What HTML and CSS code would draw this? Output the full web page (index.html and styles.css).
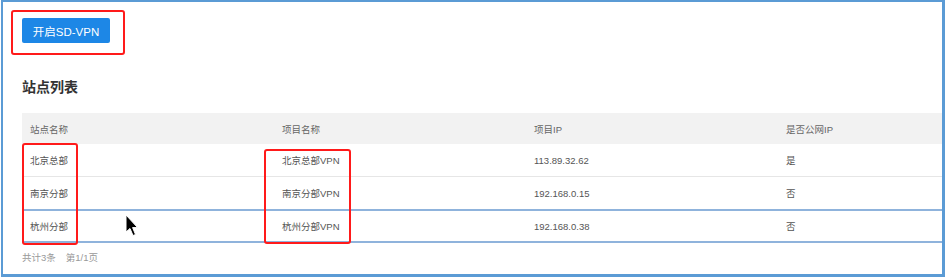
FILE: index.html
```html
<!DOCTYPE html>
<html lang="zh-CN">
<head>
<meta charset="utf-8">
<title>SD-VPN</title>
<link rel="stylesheet" href="styles.css">
</head>
<body>
<div class="frame">
  <div class="content">
    <button class="btn">开启SD-VPN</button>
    <h2 class="title">站点列表</h2>
    <div class="table">
      <div class="row head">
        <div class="cell">站点名称</div>
        <div class="cell">项目名称</div>
        <div class="cell">项目IP</div>
        <div class="cell">是否公网IP</div>
      </div>
      <div class="row">
        <div class="cell">北京总部</div>
        <div class="cell">北京总部VPN</div>
        <div class="cell">113.89.32.62</div>
        <div class="cell">是</div>
      </div>
      <div class="row">
        <div class="cell">南京分部</div>
        <div class="cell">南京分部VPN</div>
        <div class="cell">192.168.0.15</div>
        <div class="cell">否</div>
      </div>
      <div class="row selected">
        <div class="cell">杭州分部</div>
        <div class="cell">杭州分部VPN</div>
        <div class="cell">192.168.0.38</div>
        <div class="cell">否</div>
      </div>
    </div>
    <div class="footer"><span>共计3条</span><span>第1/1页</span></div>
  </div>
  <div class="mark mark-btn"></div>
  <div class="mark mark-col1"></div>
  <div class="mark mark-col2"></div>
  <svg class="cursor" width="14" height="24" viewBox="0 0 14 24">
    <path d="M1 1 L1 18 L5 14.5 L8 21.5 L10.5 20.5 L7.6 13.6 L12.6 13.6 Z" fill="#000" stroke="#fff" stroke-width="1" stroke-linejoin="round"/>
  </svg>
</div>
</body>
</html>
```

FILE: styles.css
```css
html, body {
  margin: 0;
  padding: 0;
  background: #fff;
}
body {
  font-family: "Liberation Sans", "Noto Sans CJK SC", sans-serif;
}
.frame {
  position: relative;
  box-sizing: border-box;
  margin-left: 1px;
  width: 944px;
  height: 277px;
  border-style: solid;
  border-color: #5b9bd5;
  border-width: 2px 3px 3px 2px;
  overflow: hidden;
}
.content {
  padding: 16px 0 0 19px;
}
.btn {
  display: block;
  width: 88px;
  height: 25px;
  border: 0;
  border-radius: 2px;
  background: #1d87e6;
  color: #fff;
  font-family: "Liberation Sans", "Noto Sans CJK SC", sans-serif;
  font-size: 11.5px;
  padding: 0;
}
.title {
  margin: 34px 0 0 0;
  font-size: 14px;
  line-height: 20px;
  font-weight: bold;
  color: #333;
}
.table {
  margin-top: 16px;
  width: 1008px;
  font-size: 9.5px;
  color: #555;
}
.row {
  display: grid;
  grid-template-columns: 252px 252px 252px 252px;
  height: 32px;
  align-items: center;
  border-top: 1px solid #e6e6e6;
}
.row .cell {
  padding-left: 8px;
}
.row.head {
  height: 31px;
  background: #f2f2f2;
  color: #666;
  border-top: 0;
}
.row.head + .row {
  border-top: 0;
}
.row.selected {
  height: 30px;
  border-top: 2px solid #8fb3dc;
  border-bottom: 2px solid #8fb3dc;
}
.footer {
  margin-top: 5px;
  line-height: 20px;
  font-size: 9.5px;
  color: #999;
  display: flex;
  gap: 10px;
}
.mark {
  position: absolute;
  box-sizing: border-box;
  border: 2px solid #ff1a1a;
  border-radius: 3px;
}
.mark-btn {
  left: 8px;
  top: 8px;
  width: 114px;
  height: 45px;
}
.mark-col1 {
  left: 19px;
  top: 141px;
  width: 56px;
  height: 102px;
}
.mark-col2 {
  left: 261px;
  top: 147px;
  width: 87px;
  height: 95px;
}
.cursor {
  position: absolute;
  left: 122px;
  top: 212px;
}
```
